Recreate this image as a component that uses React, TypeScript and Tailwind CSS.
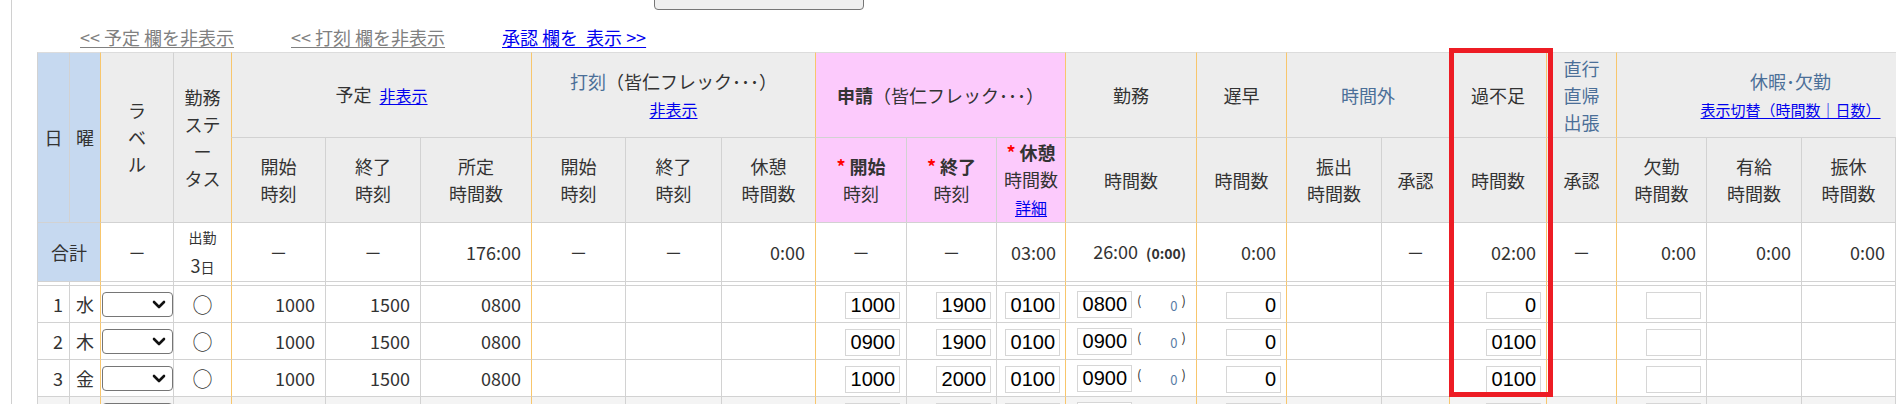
import React from 'react';

// column widths (px) and which columns start a group (orange left rule)
const widths = [32, 31, 73, 58, 94, 95, 111, 94, 96, 94, 91, 90, 69, 131, 90, 95, 68, 97, 70, 90, 95, 94, 69];
const groupStart = [2, 4, 7, 10, 13, 14, 15, 17, 18, 19];

const bl = (i: number) =>
    groupStart.includes(i) ? 'border-l border-l-[#f8c66c]' : 'border-l border-l-[#d2d2d2]';

const hd = (i: number, extra = '') =>
    `${bl(i)} border-b border-b-[#d2d2d2] p-0 font-normal text-center align-middle ${extra}`;

const td = (i: number, extra = '') =>
    `${bl(i)} border-b border-b-[#d2d2d2] p-0 align-middle ${extra}`;

const Blue = ({ children }: { children: React.ReactNode }) => (
    <span className="text-[#4b6f98]">{children}</span>
);

const Link = ({ children, small }: { children: React.ReactNode; small?: boolean }) => (
    <a className={`${small ? 'text-[15px]' : 'text-[16px]'} text-[#0000ee] underline underline-offset-2 cursor-pointer`}>
        {children}
    </a>
);

function Select() {
    return (
        <div className="ml-[1px] w-[71px] h-[25px] border border-[#767676] rounded-[4px] bg-white flex items-center justify-end pr-[6px]">
            <svg width="14" height="9" viewBox="0 0 14 9">
                <path d="M2 2 L7 7 L12 2" fill="none" stroke="#111" strokeWidth="2.6" strokeLinecap="round" strokeLinejoin="round" />
            </svg>
        </div>
    );
}

function Box({ value = '' }: { value?: string }) {
    return (
        <input
            readOnly
            value={value}
            className="inline-block align-middle w-[55px] h-[27px] border border-[#d6d6d6] bg-white text-right pr-[4px] pl-0 py-0 text-[20px] leading-[25px] text-black font-['Liberation_Sans',Arial,sans-serif] outline-none"
        />
    );
}

type Row = {
    no: string;
    dow: string;
    plan?: [string, string, string];
    req?: [string, string, string];
    work?: string;
    late?: string;
    diff?: string;
    gray?: boolean;
};

const rows: Row[] = [
    { no: '1', dow: '水', plan: ['1000', '1500', '0800'], req: ['1000', '1900', '0100'], work: '0800', late: '0', diff: '0' },
    { no: '2', dow: '木', plan: ['1000', '1500', '0800'], req: ['0900', '1900', '0100'], work: '0900', late: '0', diff: '0100' },
    { no: '3', dow: '金', plan: ['1000', '1500', '0800'], req: ['1000', '2000', '0100'], work: '0900', late: '0', diff: '0100' },
    { no: '4', dow: '土', req: ['', '', ''], work: '', late: '', diff: '', gray: true },
];

export default function App() {
    return (
        <div className="relative w-[1896px] h-[404px] overflow-hidden bg-white text-[#333] font-['Noto_Sans_CJK_JP','Noto_Sans',sans-serif]">
            <div className="ml-[11px] h-full border-l border-l-[#d0d0d0] pl-[25px] flex flex-col">
                {/* button cut off by the top of the page */}
                <div className="ml-[617px] -mt-[20px] h-[30px] w-[210px] shrink-0 rounded-[4px] border border-[#767676] bg-[#efefef]" />

                <div className="h-[42px] shrink-0 pt-[15px] pl-[43px] flex text-[18px] leading-[25px]">
                    <div className="w-[211px]">
                        <a className="text-[#808080] underline underline-offset-2">&lt;&lt; 予定 欄を非表示</a>
                    </div>
                    <div className="w-[211px]">
                        <a className="text-[#808080] underline underline-offset-2">&lt;&lt; 打刻 欄を非表示</a>
                    </div>
                    <div className="w-[211px]">
                        <a className="text-[#0000ee] underline underline-offset-2">承認 欄を&nbsp; 表示 &gt;&gt;</a>
                    </div>
                </div>

                <table className="table-fixed border-separate border-spacing-0 w-[1927px] text-[18px] leading-[27px] shrink-0">
                    <colgroup>
                        {widths.map((w, i) => (
                            <col key={i} style={{ width: w }} />
                        ))}
                    </colgroup>
                    <thead>
                        <tr className="h-[86px] [&>th]:border-t [&>th]:border-t-[#dcdcdc]">
                            <th rowSpan={2} className={hd(0, 'bg-[#c6d9f0]')}>日</th>
                            <th rowSpan={2} className={hd(1, 'bg-[#c6d9f0]')}>曜</th>
                            <th rowSpan={2} className={hd(2, 'bg-[#ededed]')}>ラ<br />ベ<br />ル</th>
                            <th rowSpan={2} className={hd(3, 'bg-[#ededed]')}>勤務<br />ステ<br />ー<br />タス</th>
                            <th colSpan={3} className={hd(4, 'bg-[#ededed]')}>
                                予定&nbsp; <Link>非表示</Link>
                            </th>
                            <th colSpan={3} className={hd(7, 'bg-[#ededed]')}>
                                <Blue>打刻</Blue>（皆仁フレック･･･）
                                <br />
                                <Link>非表示</Link>
                            </th>
                            <th colSpan={3} className={hd(10, 'bg-[#fccafc]')}>
                                <b className="font-bold">申請</b>（皆仁フレック･･･）
                            </th>
                            <th className={hd(13, 'bg-[#ededed]')}>勤務</th>
                            <th className={hd(14, 'bg-[#ededed]')}>遅早</th>
                            <th colSpan={2} className={hd(15, 'bg-[#ededed]')}><Blue>時間外</Blue></th>
                            <th className={hd(17, 'bg-[#ededed]')}>過不足</th>
                            <th className={hd(18, 'bg-[#ededed]')}><Blue>直行<br />直帰<br />出張</Blue></th>
                            <th colSpan={4} className={hd(19, 'bg-[#ededed]')}>
                                <Blue>休暇･欠勤</Blue>
                                <br />
                                <Link small>表示切替（時間数｜日数）</Link>
                            </th>
                        </tr>
                        <tr className="h-[85px]">
                            <th className={hd(4, 'bg-[#ededed]')}>開始<br />時刻</th>
                            <th className={hd(5, 'bg-[#ededed]')}>終了<br />時刻</th>
                            <th className={hd(6, 'bg-[#ededed]')}>所定<br />時間数</th>
                            <th className={hd(7, 'bg-[#ededed]')}>開始<br />時刻</th>
                            <th className={hd(8, 'bg-[#ededed]')}>終了<br />時刻</th>
                            <th className={hd(9, 'bg-[#ededed]')}>休憩<br />時間数</th>
                            <th className={hd(10, 'bg-[#fccafc]')}>
                                <span className="text-[#ff0000] font-bold">*</span> <b className="font-bold">開始</b>
                                <br />時刻
                            </th>
                            <th className={hd(11, 'bg-[#fccafc]')}>
                                <span className="text-[#ff0000] font-bold">*</span> <b className="font-bold">終了</b>
                                <br />時刻
                            </th>
                            <th className={hd(12, 'bg-[#fccafc]')}>
                                <span className="text-[#ff0000] font-bold">*</span> <b className="font-bold">休憩</b>
                                <br />時間数
                                <br />
                                <Link>詳細</Link>
                            </th>
                            <th className={hd(13, 'bg-[#ededed]')}>時間数</th>
                            <th className={hd(14, 'bg-[#ededed]')}>時間数</th>
                            <th className={hd(15, 'bg-[#ededed]')}>振出<br />時間数</th>
                            <th className={hd(16, 'bg-[#ededed]')}>承認</th>
                            <th className={hd(17, 'bg-[#ededed]')}>時間数</th>
                            <th className={hd(18, 'bg-[#ededed]')}>承認</th>
                            <th className={hd(19, 'bg-[#ededed]')}>欠勤<br />時間数</th>
                            <th className={hd(20, 'bg-[#ededed]')}>有給<br />時間数</th>
                            <th className={hd(21, 'bg-[#ededed]')}>振休<br />時間数</th>
                            <th className={hd(22, 'bg-[#ededed]')} />
                        </tr>
                    </thead>
                    <tbody>
                        <tr className="h-[56px]">
                            <td colSpan={2} className={td(0, 'bg-[#c6d9f0] text-center')}>合計</td>
                            <td className={td(2, 'text-center')}>－</td>
                            <td className={td(3, 'text-center')}>
                                <div className="text-[14px] leading-[28px]">出勤</div>
                                <div className="leading-[28px]">3<span className="text-[14px]">日</span></div>
                            </td>
                            <td className={td(4, 'text-center')}>－</td>
                            <td className={td(5, 'text-center')}>－</td>
                            <td className={td(6, 'text-right pr-[10px]')}>176:00</td>
                            <td className={td(7, 'text-center')}>－</td>
                            <td className={td(8, 'text-center')}>－</td>
                            <td className={td(9, 'text-right pr-[10px]')}>0:00</td>
                            <td className={td(10, 'text-center')}>－</td>
                            <td className={td(11, 'text-center')}>－</td>
                            <td className={td(12, 'text-right pr-[9px]')}>03:00</td>
                            <td className={td(13, 'text-right pr-[10px]')}>
                                26:00<span className="ml-[8px] text-[14px] font-bold">(0:00)</span>
                            </td>
                            <td className={td(14, 'text-right pr-[10px]')}>0:00</td>
                            <td className={td(15)} />
                            <td className={td(16, 'text-center')}>－</td>
                            <td className={td(17, 'text-right pr-[10px]')}>02:00</td>
                            <td className={td(18, 'text-center')}>－</td>
                            <td className={td(19, 'text-right pr-[10px]')}>0:00</td>
                            <td className={td(20, 'text-right pr-[10px]')}>0:00</td>
                            <td className={td(21, 'text-right pr-[10px]')}>0:00</td>
                            <td className={td(22)} />
                        </tr>
                        <tr className="h-[4px]">
                            {widths.map((_, i) => (
                                <td key={i} className={td(i)} />
                            ))}
                        </tr>
                        {rows.map((r) => (
                            <tr key={r.no} className={`h-[37px] ${r.gray ? 'bg-[#f4f4f4]' : 'bg-white'}`}>
                                <td className={td(0, 'text-right pr-[6px]')}>{r.gray ? '' : r.no}</td>
                                <td className={td(1, 'text-center')}>{r.gray ? '' : r.dow}</td>
                                <td className={td(2)}><Select /></td>
                                <td className={td(3, 'text-center text-[20px]')}>{r.gray ? '' : '○'}</td>
                                <td className={td(4, 'text-right pr-[10px]')}>{r.plan?.[0]}</td>
                                <td className={td(5, 'text-right pr-[10px]')}>{r.plan?.[1]}</td>
                                <td className={td(6, 'text-right pr-[10px]')}>{r.plan?.[2]}</td>
                                <td className={td(7)} />
                                <td className={td(8)} />
                                <td className={td(9)} />
                                <td className={td(10, 'text-right pr-[6px]')}><Box value={r.req?.[0]} /></td>
                                <td className={td(11, 'text-right pr-[5px]')}><Box value={r.req?.[1]} /></td>
                                <td className={td(12, 'text-right pr-[5px]')}><Box value={r.req?.[2]} /></td>
                                <td className={td(13, 'pl-[11px]')}>
                                    <div className="flex items-center">
                                        <Box value={r.work} />
                                        {!r.gray && (
                                            <>
                                                <span className="ml-[5px] text-[13px] leading-[16px] -mt-[6px]">(</span>
                                                <span className="w-[36px] text-right text-[13px] leading-[16px] mt-[4px] text-[#5a7da6]">0</span>
                                                <span className="ml-[4px] text-[13px] leading-[16px] -mt-[6px]">)</span>
                                            </>
                                        )}
                                    </div>
                                </td>
                                <td className={td(14, 'text-right pr-[5px]')}><Box value={r.late} /></td>
                                <td className={td(15)} />
                                <td className={td(16)} />
                                <td className={td(17, 'text-right pr-[5px]')}><Box value={r.diff} /></td>
                                <td className={td(18)} />
                                <td className={td(19, 'text-right pr-[5px]')}><Box /></td>
                                <td className={td(20)} />
                                <td className={td(21)} />
                                <td className={td(22)} />
                            </tr>
                        ))}
                    </tbody>
                </table>
            </div>

            {/* red annotation frame around 過不足 */}
            <div className="absolute left-[1449px] top-[48px] w-[104px] h-[349px] border-[5px] border-[#ed1c24] pointer-events-none" />
        </div>
    );
}
